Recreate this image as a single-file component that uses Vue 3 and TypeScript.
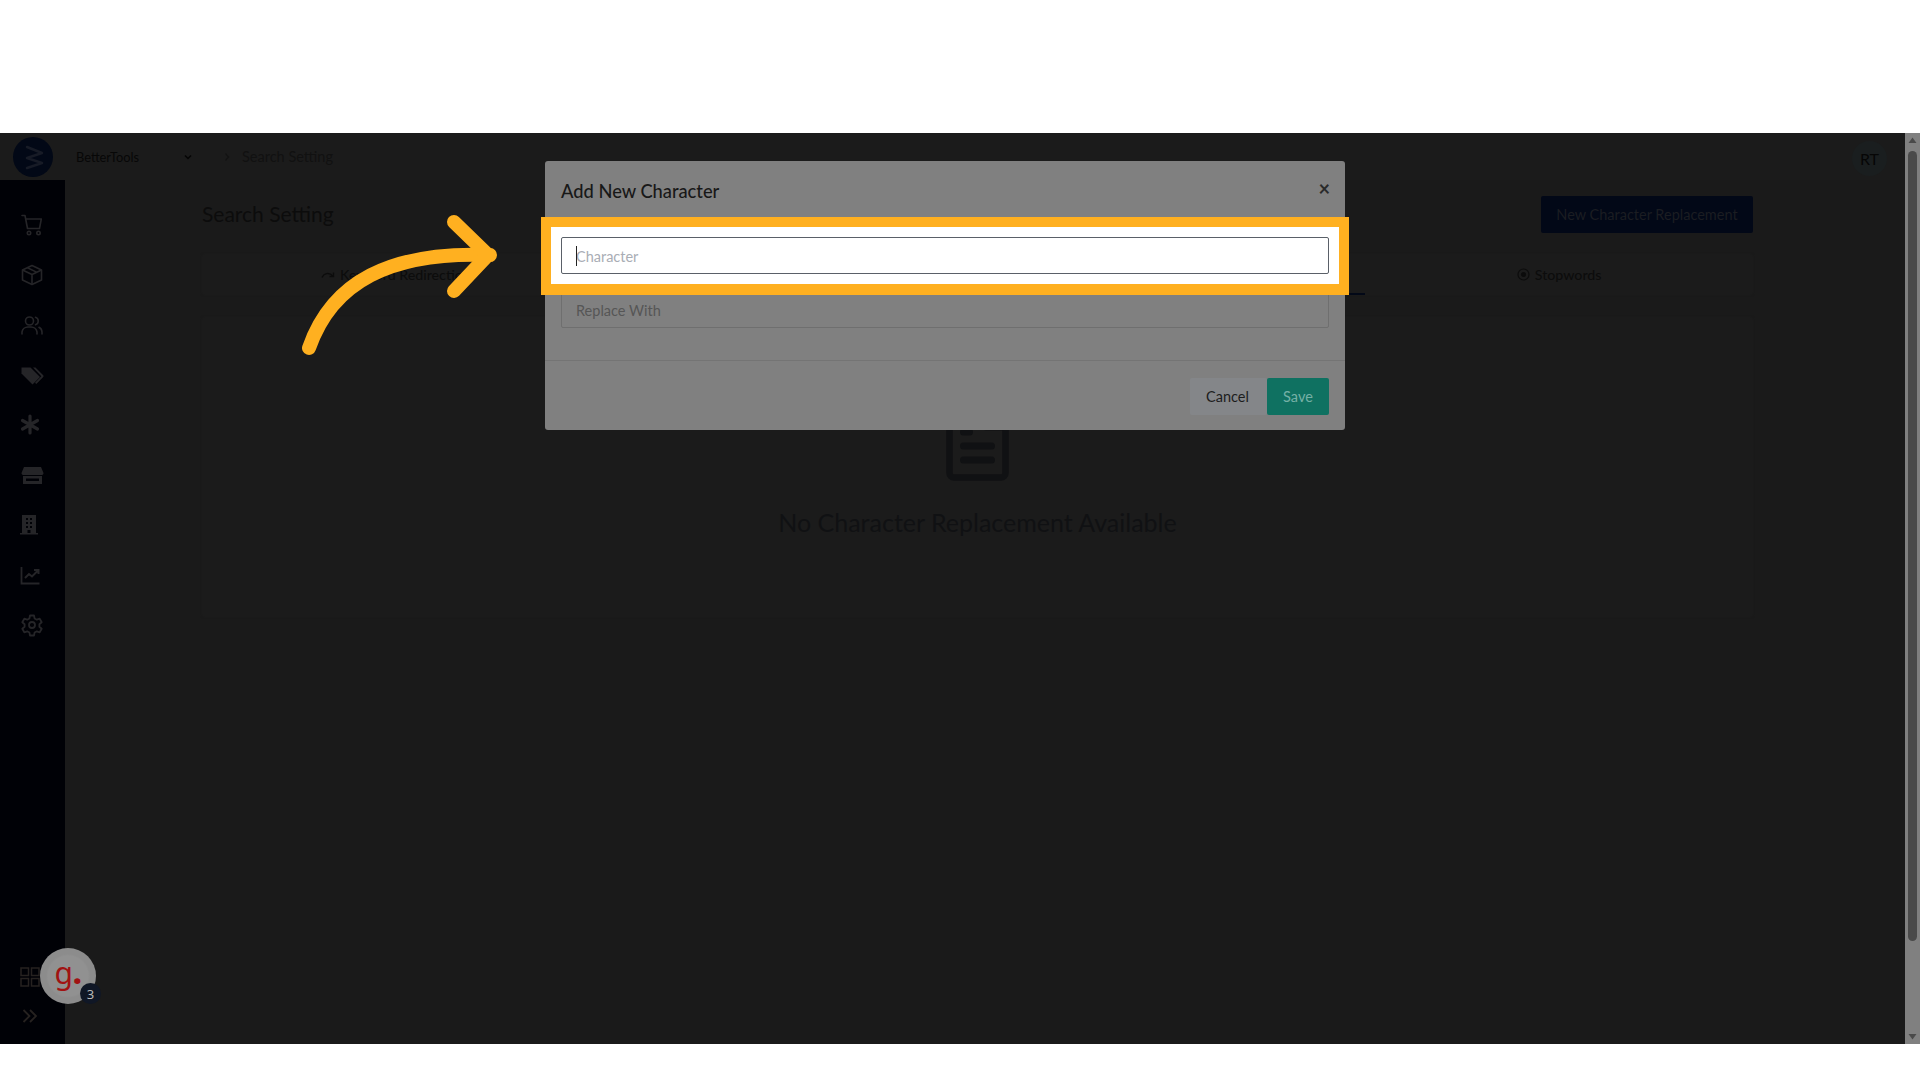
<script setup lang="ts">
const icons = ['cart', 'box', 'users', 'tag', 'star', 'store', 'building', 'chart', 'gear']
const tabs = [
  { label: 'Keyword Redirection', icon: 'redirect' },
  { label: 'Synonyms', icon: '' },
  { label: 'Character Replacement', icon: '', active: true },
  { label: 'Stopwords', icon: 'stop' },
]
</script>

<template>
  <div class="page">
    <div class="frame">
      <div class="app">
        <header class="topbar">
          <div class="logo">
            <svg width="40" height="40" viewBox="0 0 40 40" fill="none" stroke="#171b26" stroke-width="2.500" stroke-linecap="round" stroke-linejoin="round">
              <path d="M14 10 L29 16 L14 21 L29 26 L14 31" />
            </svg>
          </div>
          <span class="org">BetterTools</span>
          <svg class="chev" width="10" height="8" viewBox="0 0 10 8" fill="none" stroke="#050505" stroke-width="1.500"><path d="M2 2.500 L5 5.500 L8 2.500" /></svg>
          <svg class="crumb-sep" width="8" height="10" viewBox="0 0 8 10" fill="none" stroke="#131313" stroke-width="1.200"><path d="M2.500 1.500 L5.500 5 L2.500 8.500" /></svg>
          <span class="crumb">Search Setting</span>
          <div class="avatar">RT</div>
        </header>
        <div class="body">
          <aside class="sidebar">
            <nav class="nav">
              <div v-for="name in icons" :key="name" class="nav-item">
                <svg v-if="name === 'cart'" width="24" height="24" viewBox="0 0 24 24" fill="none" stroke="#252528" stroke-width="1.600" stroke-linecap="round" stroke-linejoin="round"><path d="M2 2.500h3l2.500 13h12l1.800-9.500H6" /><circle cx="9" cy="20" r="1.700" /><circle cx="18.500" cy="20" r="1.700" /></svg>
                <svg v-else-if="name === 'box'" width="24" height="24" viewBox="0 0 24 24" fill="none" stroke="#252528" stroke-width="1.600" stroke-linejoin="round"><path d="M12 2.500 21.500 7v10L12 21.500 2.500 17V7Z" /><path d="M2.500 7 12 11.500 21.500 7M12 11.500v10M7.500 4.800l9.500 4.600" /></svg>
                <svg v-else-if="name === 'users'" width="24" height="24" viewBox="0 0 24 24" fill="none" stroke="#252528" stroke-width="1.600" stroke-linecap="round"><circle cx="9.500" cy="8" r="4" /><path d="M2 21v-2a6 6 0 0 1 6-5h3a6 6 0 0 1 6 5v2" /><path d="M15.500 4.200a4 4 0 0 1 0 7.600M19 14.300a5.500 5.500 0 0 1 3 5V21" /></svg>
                <svg v-else-if="name === 'tag'" width="24" height="24" viewBox="0 0 24 24" fill="#252528"><path d="M1.500 4.500h9l9.500 9.500-7.500 7.500L3 12 1.500 10.500Z" /><path d="M13 4.500h2.500L23 12c.7.700.7 1.600 0 2.300l-6.700 6.700-1.300-1.300 6.300-6.500Z" /></svg>
                <svg v-else-if="name === 'star'" width="24" height="24" viewBox="0 0 24 24" fill="none" stroke="#252528" stroke-width="3.200" stroke-linecap="round"><path d="M10 3v17M2.500 7.500l15 8.500M17.500 7.500l-15 8.500" /></svg>
                <svg v-else-if="name === 'store'" width="24" height="24" viewBox="0 0 24 24" fill="#252528"><path d="M4 4h17l2.500 6c0 1.500-1 2-2 2H3.500c-1 0-2-.5-2-2Z" /><path d="M3 13h19v8H3Zm3 2.500V18h13v-2.500Z" fill-rule="evenodd" /></svg>
                <svg v-else-if="name === 'building'" width="24" height="24" viewBox="0 0 24 24" fill="#252528"><path fill-rule="evenodd" d="M2 2h14v18h2v1.500H0V20h2Zm4 3v2h2V5Zm4 0v2h2V5ZM6 9v2h2V9Zm4 0v2h2V9Zm-4 4v2h2v-2Zm4 0v2h2v-2Zm-2.500 4v3h3v-3Z" /></svg>
                <svg v-else-if="name === 'chart'" width="24" height="24" viewBox="0 0 24 24" fill="none" stroke="#252528" stroke-width="1.800"><path d="M1.500 4v16.500h18" /><path d="M5 15l4-4 3 2.500 6-6M14 7h4.500v4" stroke-width="2" /></svg>
                <svg v-else width="24" height="24" viewBox="0 0 24 24" fill="none" stroke="#252528" stroke-width="1.800" stroke-linejoin="round"><path d="M10 2.500h4l.6 3 2.200 1.200 2.900-1 2 3.500-2.300 2 0 2.600 2.300 2-2 3.500-2.900-1-2.200 1.200-.6 3h-4l-.6-3-2.200-1.200-2.900 1-2-3.500 2.300-2 0-2.600-2.300-2 2-3.500 2.900 1 2.200-1.200Z" /><circle cx="12" cy="12" r="3" /></svg>
              </div>
            </nav>
            <div class="side-bottom">
              <svg width="20" height="20" viewBox="0 0 20 20" fill="none" stroke="#262220" stroke-width="1.500"><rect x="1" y="1" width="7.500" height="7.500" /><rect x="11.500" y="1" width="7.500" height="7.500" /><rect x="1" y="11.500" width="7.500" height="7.500" /><rect x="11.500" y="11.500" width="7.500" height="7.500" /></svg>
              <svg width="16" height="14" viewBox="0 0 16 14" fill="none" stroke="#262220" stroke-width="1.800"><path d="M1.500 1 7.500 7 1.500 13M8 1 14 7 8 13" /></svg>
            </div>
          </aside>
          <main class="main">
            <div class="title-row">
              <h1 class="page-title">Search Setting</h1>
              <div class="primary">New Character Replacement</div>
            </div>
            <div class="tabs">
              <div v-for="t in tabs" :key="t.label" class="tab" :class="{ active: t.active }">
                <svg v-if="t.icon === 'redirect'" width="14" height="10" viewBox="0 0 14 10" fill="none" stroke="#0c0c0c" stroke-width="1.300"><path d="M1 7.500C3 3 8 2 12 6M12.500 2.500v4h-4" /></svg>
                <svg v-if="t.icon === 'stop'" width="13" height="13" viewBox="0 0 13 13" fill="none" stroke="#0c0c0c" stroke-width="1.200"><circle cx="6.500" cy="6.500" r="5.500" /><circle cx="6.500" cy="6.500" r="2" fill="#0c0c0c" /></svg>
                <span>{{ t.label }}</span>
              </div>
            </div>
            <section class="card">
              <svg class="empty-icon" width="63" height="75" viewBox="0 0 63 75" fill="none" stroke="#101113" stroke-linecap="round">
                <path d="M14 10H8a4.500 4.500 0 0 0-4.500 4.500V67a4.500 4.500 0 0 0 4.500 4.500h47a4.500 4.500 0 0 0 4.500-4.500V14.500A4.500 4.500 0 0 0 55 10h-6" stroke-width="6.500" />
                <path d="M40 22h16" stroke-width="5" />
                <path d="M17.500 26h6M17.500 40h28M17.500 54h28" stroke-width="7" />
              </svg>
              <p class="empty-text">No Character Replacement Available</p>
            </section>
          </main>
        </div>
      </div>
      <div class="scrollbar">
        <svg width="15" height="15" viewBox="0 0 15 15" fill="#4a4a4a"><path d="M3.500 10 7.500 4.500 11.500 10Z" /></svg>
        <div class="thumb"></div>
        <svg width="15" height="15" viewBox="0 0 15 15" fill="#4a4a4a"><path d="M3.500 5 7.500 10.500 11.500 5Z" /></svg>
      </div>

      <div class="modal">
        <div class="modal-head">
          <h2>Add New Character</h2>
          <span class="close">×</span>
        </div>
        <div class="modal-body">
          <div class="field spacer"></div>
          <div class="field">Replace With</div>
        </div>
        <div class="modal-foot">
          <div class="btn cancel">Cancel</div>
          <div class="btn save">Save</div>
        </div>
      </div>

      <div class="highlight">
        <div class="focus-input"><i class="caret"></i>Character</div>
      </div>

      <svg class="arrow" width="210" height="150" viewBox="0 0 210 150" fill="none" stroke="#ffb020" stroke-width="14" stroke-linecap="round" stroke-linejoin="round">
        <path d="M9 134C32 68 90 37 190 41" />
        <path d="M154 8 188 41 154 77" />
      </svg>

      <div class="widget">
        <span class="g">g<b>.</b></span>
        <span class="badge">3</span>
      </div>
    </div>
    <div class="foot-gap"></div>
  </div>
</template>

<style scoped>
.page {
  width: 1920px;
  height: 1080px;
  background: #fff;
  padding-top: 133px;
  box-sizing: border-box;
  font-family: Lato, "Noto Sans", sans-serif;
  overflow: hidden;
}
.frame {
  position: relative;
  display: flex;
  height: 911px;
  background: #1a1a1a;
}
.app {
  flex: 1;
  display: flex;
  flex-direction: column;
  min-width: 0;
}
.topbar {
  height: 47px;
  display: flex;
  align-items: center;
  padding-left: 13px;
  background: #1b1b1b;
  flex: none;
}
.logo {
  width: 40px;
  height: 40px;
  border-radius: 50%;
  background: #020816;
  flex: none;
}
.org {
  margin-left: 23px;
  width: 62px;
  flex: none;
  font-size: 12.800px;
  color: #070707;
}
.chev {
  margin-left: 45px;
}
.crumb-sep {
  margin-left: 30px;
}
.crumb {
  margin-left: 11px;
  font-size: 14.500px;
  color: #111;
}
.avatar {
  margin: 4px 18px 0 auto;
  width: 35px;
  height: 35px;
  border-radius: 50%;
  background: #1a1e1f;
  color: #060606;
  font-size: 16px;
  display: flex;
  align-items: center;
  justify-content: center;
}
.body {
  flex: 1;
  display: flex;
  min-height: 0;
}
.sidebar {
  width: 65px;
  flex: none;
  background: #000106;
  display: flex;
  flex-direction: column;
  justify-content: space-between;
  padding: 33px 0 21px;
  box-sizing: border-box;
}
.nav {
  display: flex;
  flex-direction: column;
  gap: 26px;
}
.nav-item {
  height: 24px;
  padding-left: 20px;
  line-height: 0;
}
.side-bottom {
  display: flex;
  flex-direction: column;
  gap: 22px;
  padding-left: 20px;
  align-items: flex-start;
}
.side-bottom svg:last-child {
  margin-left: 2px;
}
.main {
  flex: 1;
  padding: 16px 0 0 137px;
  width: 1551px;
  box-sizing: border-box;
}
.title-row {
  width: 1551px;
  height: 37px;
  display: flex;
  align-items: center;
  justify-content: space-between;
}
.page-title {
  margin: -3px 0 0;
  font-size: 21px;
  font-weight: 400;
  color: #0c0c0c;
}
.primary {
  width: 212px;
  height: 37px;
  background: #020817;
  border-radius: 2px;
  color: #1b1d22;
  font-size: 14.500px;
  display: flex;
  align-items: center;
  justify-content: center;
}
.tabs {
  width: 1551px;
  height: 41px;
  margin-top: 21px;
  display: grid;
  grid-template-columns: repeat(4, 1fr);
  background: #1b1b1b;
  border-radius: 3px;
  box-shadow: 0 0 2px #1d1d1d;
}
.tab {
  display: flex;
  align-items: center;
  justify-content: center;
  gap: 5px;
  font-size: 14.200px;
  font-weight: 500;
  color: #0c0c0c;
}
.tab.active {
  border-bottom: 2px solid #020817;
}
.card {
  width: 1551px;
  height: 300px;
  margin-top: 22px;
  background: #1b1b1b;
  border-radius: 3px;
  box-shadow: 0 0 2px #1d1d1d;
  position: relative;
  display: flex;
  flex-direction: column;
  align-items: center;
  padding-top: 89px;
  box-sizing: border-box;
}
.empty-icon {
  flex: none;
}
.empty-text {
  margin: 26px 0 0;
  font-size: 25px;
  line-height: 30px;
  color: #101113;
}
.scrollbar {
  width: 15px;
  flex: none;
  background: #808080;
  display: flex;
  flex-direction: column;
  align-items: center;
  line-height: 0;
}
.thumb {
  width: 9px;
  height: 790px;
  margin: 3px 0 0;
  flex: none;
  background: #4a4a4a;
  border-radius: 5px;
}
.scrollbar svg:last-child {
  margin-top: auto;
}
.modal {
  position: absolute;
  left: 545px;
  top: 28px;
  width: 800px;
  height: 269px;
  background: #808080;
  border-radius: 3px;
  display: flex;
  flex-direction: column;
}
.modal-head {
  height: 56px;
  padding: 0 16px;
  display: flex;
  align-items: center;
  justify-content: space-between;
  flex: none;
}
.modal-head h2 {
  margin: 0;
  font-size: 18.300px;
  font-weight: 500;
  color: #181818;
  padding-top: 3px;
}
.close {
  font-size: 20px;
  font-weight: 700;
  color: #2a2a2a;
  margin: -2px -1px 0 0;
}
.modal-body {
  flex: 1;
  padding: 20px 16px 0;
  display: flex;
  flex-direction: column;
  gap: 17px;
  border-bottom: 1px solid #747474;
}
.field {
  height: 37px;
  flex: none;
  box-sizing: border-box;
  border: 1px solid #6f6f6f;
  border-radius: 2px;
  padding: 1px 0 0 14px;
  display: flex;
  align-items: center;
  font-size: 14.500px;
  color: #565656;
}
.field.spacer {
  border-color: transparent;
}
.modal-foot {
  height: 69px;
  flex: none;
  box-sizing: border-box;
  padding: 17px 16px 0;
  display: flex;
  justify-content: flex-end;
}
.btn {
  height: 37px;
  display: flex;
  align-items: center;
  justify-content: center;
  font-size: 14.500px;
  border-radius: 2px;
}
.cancel {
  width: 77px;
  box-sizing: border-box;
  padding-right: 2px;
  background: #848689;
  color: #1d1d1d;
}
.save {
  width: 62px;
  background: #0f7161;
  color: #75b0a6;
}
.highlight {
  position: absolute;
  left: 541px;
  top: 84px;
  width: 808px;
  height: 78px;
  box-sizing: border-box;
  border: 10px solid #ffb020;
  border-bottom-width: 11px;
  background: #fff;
  padding: 10px;
}
.focus-input {
  height: 37px;
  box-sizing: border-box;
  border: 1px solid #5a6068;
  border-radius: 2px;
  padding: 1px 0 0 14px;
  display: flex;
  align-items: center;
  font-size: 14.500px;
  color: #a9adb5;
  position: relative;
}
.caret {
  position: absolute;
  left: 14px;
  top: 8px;
  width: 1px;
  height: 20px;
  background: #222;
}
.arrow {
  position: absolute;
  left: 300px;
  top: 81px;
}
.widget {
  position: absolute;
  left: 40px;
  top: 815px;
  width: 56px;
  height: 56px;
  border-radius: 50%;
  background: radial-gradient(circle, #919191 0 20px, #8c8c8c 22px);
  display: flex;
  align-items: center;
  justify-content: center;
}
.g {
  font-family: "Noto Sans", sans-serif;
  font-size: 30px;
  line-height: 1;
  color: #a11212;
  margin-top: -6px;
}
.g b {
  font-weight: 900;
}
.badge {
  position: absolute;
  left: 40px;
  top: 35px;
  width: 21px;
  height: 21px;
  border-radius: 50%;
  background: #101726;
  color: #b9b9b9;
  font-family: "Noto Sans", sans-serif;
  font-size: 13px;
  display: flex;
  align-items: center;
  justify-content: center;
}
.foot-gap {
  height: 36px;
}
</style>
